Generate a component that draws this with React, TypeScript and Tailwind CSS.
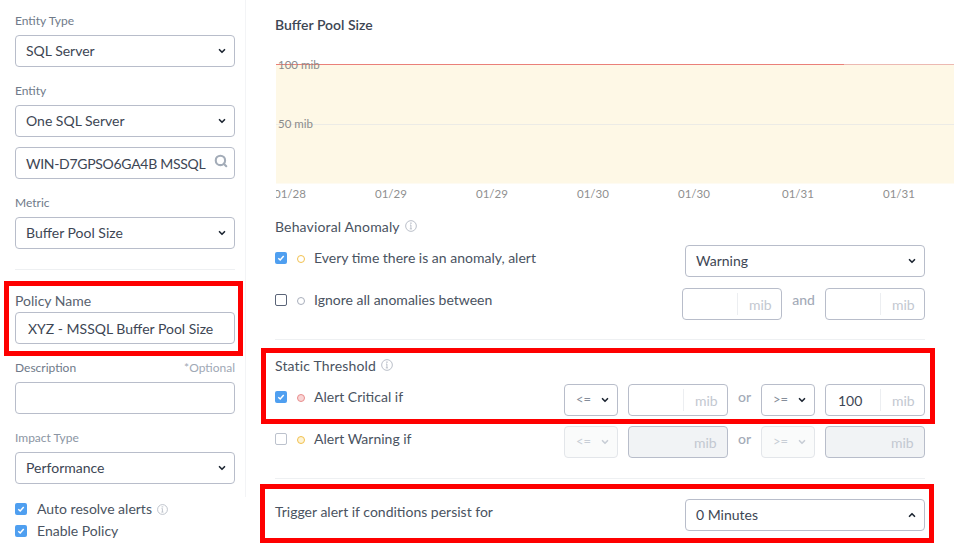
import React from "react";
import { ChevronDown, ChevronUp, Search } from "lucide-react";

const FONT = "font-['Lato','Liberation_Sans',sans-serif]";

// Small labelled dropdown look-alike
const Select = ({
  value,
  className = "w-full",
  up = false,
  disabled = false,
  op = false,
}: {
  value: string;
  className?: string;
  up?: boolean;
  disabled?: boolean;
  op?: boolean;
}) => (
  <div
    className={`flex h-8 shrink-0 items-center justify-between rounded border ${
      disabled ? "border-[#e3e6ea] bg-[#fafbfb]" : "border-[#b8bdca] bg-white"
    } pr-[7px] ${op ? "pl-[11px] text-[13px]" : "pl-[10px] text-[14px]"} ${
      disabled ? "text-[#c8ced6]" : op ? "text-[#858d9a]" : "text-[#3d4654]"
    } ${className}`}
  >
    <span className={op ? "" : "pb-[2px]"}>{value}</span>
    {up ? (
      <ChevronUp size={10} strokeWidth={4} className="text-[#1e2733]" />
    ) : (
      <ChevronDown size={10} strokeWidth={4} className={disabled ? "text-[#c8ced6]" : "text-[#1e2733]"} />
    )}
  </div>
);

const UnitInput = ({ value = "", disabled = false, className = "" }: { value?: string; disabled?: boolean; className?: string }) => (
  <div
    className={`flex h-8 w-[100px] shrink-0 items-center rounded border border-[#b8bdca] ${disabled ? "bg-[#f1f3f5]" : "bg-white"} text-[14px] ${className}`}
  >
    <div className="flex-1 pl-[12px] pt-[1px] text-[#3d4654]">{value}</div>
    <div className={`flex h-[22px] w-[44px] items-center pl-[11px] pt-[1px] text-[#c3c8d1] ${disabled ? "" : "border-l border-[#eceef1]"}`}>mib</div>
  </div>
);

const Label = ({ children, className = "" }: { children: React.ReactNode; className?: string }) => (
  <div className={`h-4 text-[12px] leading-4 text-[#6f7a89] ${className}`}>{children}</div>
);

const Check = ({ checked = false, faint = false }: { checked?: boolean; faint?: boolean }) =>
  checked ? (
    <span className="flex h-3 w-3 shrink-0 items-center justify-center rounded-[2px] bg-[#4f9ff0]">
      <svg width="8" height="8" viewBox="0 0 8 8" fill="none">
        <path d="M1.3 4.2 3.2 6 6.7 2" stroke="#fff" strokeWidth="1.5" />
      </svg>
    </span>
  ) : (
    <span className={`h-3 w-3 shrink-0 rounded-[2px] border ${faint ? "border-[#bcc2cd]" : "border-[#5a6478]"} bg-white`} />
  );

const Dot = ({ className }: { className: string }) => <span className={`mt-[2px] h-[8px] w-[8px] shrink-0 rounded-full border ${className}`} />;

const InfoIcon = ({ size = 12 }: { size?: number }) => (
  <svg width={size} height={size} viewBox="0 0 13 13" fill="none" className="shrink-0">
    <circle cx="6.5" cy="6.5" r="5.8" stroke="#b4bac4" />
    <path d="M5.4 3.4h2M6.4 5.4v4M5.2 9.6h2.4M5.4 5.4h1" stroke="#b4bac4" />
  </svg>
);

const AlertLabel = ({ text, dot, className, check }: { text: string; dot: string; className: string; check: React.ReactNode }) => (
  <div className={`flex items-center gap-[10px] text-[14px] text-[#4a5361] ${className}`}>
    {check}
    <Dot className={dot} />
    <span className="-ml-[1px] -mt-[2px]">{text}</span>
  </div>
);

const Divider = ({ className = "" }: { className?: string }) => <div className={`h-px bg-[#eef0f2] ${className}`} />;

const ticks = [
  { x: -1, t: "01/28" },
  { x: 100, t: "01/29" },
  { x: 201, t: "01/29" },
  { x: 302, t: "01/30" },
  { x: 403, t: "01/30" },
  { x: 507, t: "01/31" },
  { x: 608, t: "01/31" },
];

const Chart = () => (
  <svg width="678" height="150" viewBox="1 0 678 150" className="ml-px mt-5 block">
    <rect x="1" y="10" width="678" height="118.5" fill="#fef8e6" />
    <line x1="1" x2="679" y1="69.5" y2="69.5" stroke="#ecebe6" />
    <line x1="1" x2="569" y1="9.5" y2="9.5" stroke="#ea8079" />
    <line x1="569" x2="679" y1="9.5" y2="9.5" stroke="#ecb9b2" />
    <text x="3" y="14" fontSize="11.5" fill="#8b8b8b">100 mib</text>
    <text x="3" y="73" fontSize="11.5" fill="#8b8b8b">50 mib</text>
    {ticks.map((k, i) => (
      <text key={i} x={k.x} y="143" fontSize="11.5" fill="#8f8f8f">
        {k.t}
      </text>
    ))}
  </svg>
);

export default function App() {
  return (
    <div className={`relative flex h-[559px] w-[954px] overflow-hidden bg-white ${FONT}`}>
      {/* Left form column */}
      <div className="relative w-[246px] shrink-0 pl-[15px] pr-[11px] pt-[13px]">
        <div className="absolute right-0 top-0 h-[497px] w-px bg-[#f3f4f6]" />
        <Label className="mb-[6px]">Entity Type</Label>
        <Select value="SQL Server" />
        <Label className="mb-[6px] mt-4">Entity</Label>
        <Select value="One SQL Server" />
        <div className="mt-[10px] flex h-8 items-center justify-between rounded border border-[#b8bdca] pl-[10px] pr-[6px] text-[14px] tracking-[-0.3px] text-[#3d4654]">
          <span className="whitespace-nowrap">WIN-D7GPSO6GA4B MSSQL</span>
          <Search size={14} strokeWidth={3.6} className="mb-[5px] shrink-0 text-[#a3acb8]" />
        </div>
        <Label className="mb-[6px] mt-4">Metric</Label>
        <Select value="Buffer Pool Size" />
        <Divider className="mt-5" />
        <div className="mt-[23px] h-4 text-[14px] leading-4 text-[#59626f]">Policy Name</div>
        <div className="mt-[3px] flex h-8 items-center rounded border border-[#b8bdca] pl-[12px] text-[14px] text-[#3d4654]">
          XYZ - MSSQL Buffer Pool Size
        </div>
        <div className="mb-[6px] mt-4 flex justify-between">
          <Label>Description</Label>
          <Label className="text-[#a0a8b5]">*Optional</Label>
        </div>
        <div className="h-8 rounded border border-[#b8bdca]" />
        <Label className="mb-[6px] mt-4 text-[#8b95a3]">Impact Type</Label>
        <Select value="Performance" />
        <div className="mt-[15px] flex h-5 items-center text-[14px] text-[#4a5361]">
          <Check checked />
          <span className="ml-[10px] mr-[5px] -mt-[2px]">Auto resolve alerts</span>
          <InfoIcon size={11} />
        </div>
        <div className="mt-[2px] flex h-5 items-center text-[14px] text-[#4a5361]">
          <Check checked />
          <span className="ml-[10px] -mt-[2px]">Enable Policy</span>
        </div>
      </div>

      {/* Right side: chart and thresholds */}
      <div className="w-[708px] shrink-0 pl-[29px] pt-[15px]">
        <div className="h-5 text-[14px] font-semibold leading-5 text-[#3d4654]">Buffer Pool Size</div>
        <Chart />
        <div className="w-[650px]">
          <div className="mt-3 flex h-5 items-center gap-[5px] pb-[2px] text-[14px] tracking-[0.15px] text-[#4a5361]">
            Behavioral Anomaly <InfoIcon />
          </div>
          <div className="mt-2 flex items-center justify-between">
            <AlertLabel text="Every time there is an anomaly, alert" dot="border-[#f2c14e]" className="pb-[6px]" check={<Check checked />} />
            <Select value="Warning" className="w-[240px]" />
          </div>
          <div className="mt-[11px] flex items-center justify-between">
            <AlertLabel text="Ignore all anomalies between" dot="border-[#a8aebb]" className="pb-[8px]" check={<Check />} />
            <div className="flex items-center">
              <UnitInput />
              <span className="w-[43px] pb-[9px] text-center text-[14px] font-medium text-[#a3aab7]">and</span>
              <UnitInput />
            </div>
          </div>
          <Divider className="mt-[19px]" />
          <div className="mt-4 flex h-5 items-center gap-[5px] pb-[2px] text-[14px] tracking-[0.15px] text-[#4a5361]">
            Static Threshold <InfoIcon />
          </div>
          <div className="mt-2 flex items-center justify-between">
            <AlertLabel text="Alert Critical if" dot="border-[#e88d8d] bg-[#f9d5d5]" className="pb-[6px]" check={<Check checked />} />
            <div className="flex items-center">
              <Select value="<=" op className="w-[54px]" />
              <UnitInput className="ml-[10px]" />
              <span className="w-[33px] pb-[8px] text-center text-[14px] font-medium text-[#a3aab7]">or</span>
              <Select value=">=" op className="w-[54px]" />
              <UnitInput value="100" className="ml-[10px]" />
            </div>
          </div>
          <div className="mt-[10px] flex items-center justify-between">
            <AlertLabel text="Alert Warning if" dot="border-[#f2c14e] bg-[#fdf3d6]" className="pb-[6px]" check={<Check faint />} />
            <div className="flex items-center">
              <Select value="<=" op className="w-[54px]" disabled />
              <UnitInput disabled className="ml-[10px]" />
              <span className="w-[33px] pb-[8px] text-center text-[14px] font-medium text-[#a3aab7]">or</span>
              <Select value=">=" op className="w-[54px]" disabled />
              <UnitInput disabled className="ml-[10px]" />
            </div>
          </div>
          <Divider className="mt-5" />
          <div className="mt-5 flex items-center justify-between">
            <span className="pb-[7px] text-[14px] text-[#4a5361]">Trigger alert if conditions persist for</span>
            <Select value="0 Minutes" className="w-[240px]" up />
          </div>
        </div>
      </div>

      {/* Red annotation boxes drawn over the form */}
      <div className="pointer-events-none absolute left-[4px] top-[281px] h-[75px] w-[239px] border-[5px] border-[#fe0000]" />
      <div className="pointer-events-none absolute left-[261px] top-[348px] h-[76px] w-[674px] border-[5px] border-[#fe0000]" />
      <div className="pointer-events-none absolute left-[260px] top-[484px] h-[59px] w-[674px] border-[5px] border-[#fe0000]" />
    </div>
  );
}
